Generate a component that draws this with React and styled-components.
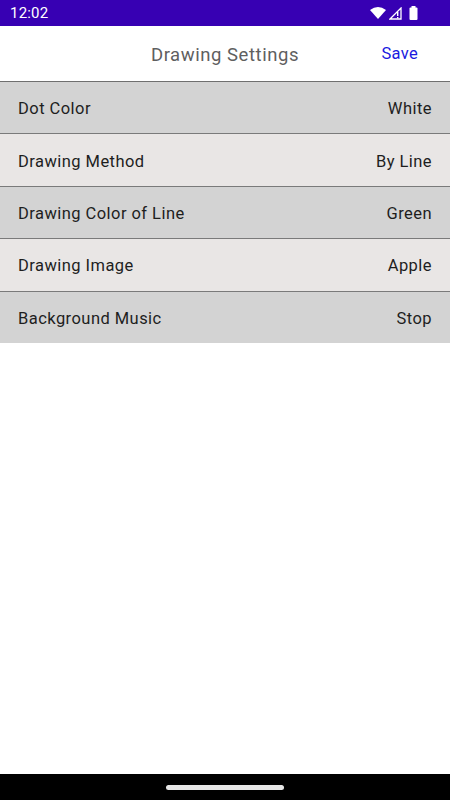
import React from "react";
import styled, { createGlobalStyle } from "styled-components";

const Global = createGlobalStyle`
  html, body { margin: 0; padding: 0; background: #fff; }
  body { font-family: Roboto, "Noto Sans", sans-serif; }
  #root { min-height: 800px; }
`;

const Screen = styled.div`
  width: 450px;
  height: 800px;
  display: flex;
  flex-direction: column;
  background: #fff;
  overflow: hidden;
`;

const StatusBar = styled.div`
  height: 26px;
  background: #3700b3;
  color: #fff;
  display: flex;
  align-items: center;
  justify-content: space-between;
  padding: 0 30px 0 10px;
  box-sizing: border-box;
  font-size: 15px;
  letter-spacing: 0.2px;
`;

const StatusIcons = styled.div`
  display: flex;
  align-items: center;
  gap: 3px;
`;

const Header = styled.div`
  height: 55px;
  display: grid;
  grid-template-columns: 1fr auto 1fr;
  align-items: center;
  border-bottom: 1px solid #6f6f6f;
  padding: 0 32px;
`;

const Title = styled.div`
  grid-column: 2;
  font-size: 18.5px;
  color: #5f5f5f;
  letter-spacing: 0.55px;
  margin-top: 2px;
`;

const SaveButton = styled.div`
  justify-self: end;
  font-size: 16.5px;
  color: #1a1ae0;
  letter-spacing: 0.3px;
`;

const List = styled.div`
  display: flex;
  flex-direction: column;
`;

const Row = styled.div`
  height: 51.4px;
  box-sizing: content-box;
  display: flex;
  align-items: center;
  justify-content: space-between;
  padding: 0 18px;
  background: ${(p) => (p.$alt ? "#e9e6e5" : "#d3d3d3")};
  border-bottom: ${(p) => (p.$last ? "none" : "1px solid #7a7a7a")};
  font-size: 16.5px;
  color: #1e1e1e;
  letter-spacing: 0.45px;
`;

const Label = styled.span`
  padding-top: 2px;
`;

const Spacer = styled.div`
  flex: 1;
`;

const NavBar = styled.div`
  height: 26px;
  background: #000;
  display: flex;
  align-items: center;
  justify-content: center;
`;

const Pill = styled.div`
  width: 118px;
  height: 5px;
  border-radius: 3px;
  background: #e6e6e6;
`;

const rows = [
  ["Dot Color", "White"],
  ["Drawing Method", "By Line"],
  ["Drawing Color of Line", "Green"],
  ["Drawing Image", "Apple"],
  ["Background Music", "Stop"],
];

export default function App() {
  return (
    <>
      <Global />
      <Screen>
        <StatusBar>
          <span>12:02</span>
          <StatusIcons>
            <svg width="16" height="13" viewBox="0 0 16 13">
              <path d="M0 3 Q8 -3 16 3 L8 12 Z" fill="#fff" />
            </svg>
            <svg width="13" height="13" viewBox="0 0 13 13">
              <path d="M12 1 L12 12 L1 12 Z" fill="none" stroke="#fff" strokeWidth="1.3" />
              <rect x="8" y="5" width="1.4" height="4" fill="#fff" />
              <rect x="8" y="10" width="1.4" height="1.4" fill="#fff" />
            </svg>
            <svg width="12" height="14" viewBox="0 0 12 14" style={{ marginLeft: 3 }}>
              <rect x="3.5" y="0" width="4" height="2" fill="#fff" />
              <rect x="1.5" y="1.5" width="8" height="12.5" rx="1" fill="#fff" />
            </svg>
          </StatusIcons>
        </StatusBar>
        <Header>
          <Title>Drawing Settings</Title>
          <SaveButton>Save</SaveButton>
        </Header>
        <List>
          {rows.map(([label, value], i) => (
            <Row key={label} $alt={i % 2 === 1} $last={i === rows.length - 1}>
              <Label>{label}</Label>
              <Label>{value}</Label>
            </Row>
          ))}
        </List>
        <Spacer />
        <NavBar>
          <Pill />
        </NavBar>
      </Screen>
    </>
  );
}
